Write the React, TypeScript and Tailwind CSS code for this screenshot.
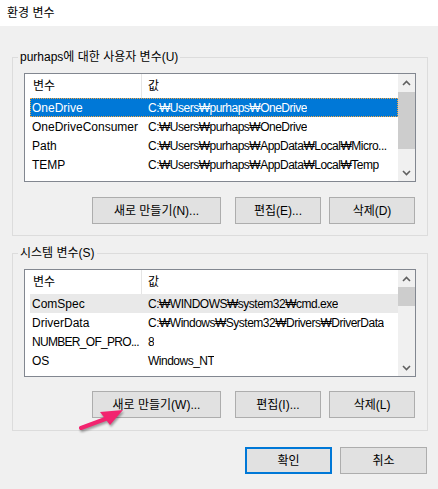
import React from 'react';

type Row = { name: string; value: string; tight?: boolean };

const userRows: Row[] = [
  { name: 'OneDrive', value: 'C:₩Users₩purhaps₩OneDrive' },
  { name: 'OneDriveConsumer', value: 'C:₩Users₩purhaps₩OneDrive' },
  { name: 'Path', value: 'C:₩Users₩purhaps₩AppData₩Local₩Micro...' },
  { name: 'TEMP', value: 'C:₩Users₩purhaps₩AppData₩Local₩Temp' },
];

const systemRows: Row[] = [
  { name: 'ComSpec', value: 'C:₩WINDOWS₩system32₩cmd.exe' },
  { name: 'DriverData', value: 'C:₩Windows₩System32₩Drivers₩DriverData' },
  { name: 'NUMBER_OF_PRO...', value: '8', tight: true },
  { name: 'OS', value: 'Windows_NT' },
];

const Chevron: React.FC<{ up?: boolean }> = ({ up }) => (
  <svg width="9" height="6" viewBox="0 0 9 6" className="block">
    <path
      d={up ? 'M1 5 L4.5 1.5 L8 5' : 'M1 1 L4.5 4.5 L8 1'}
      fill="none"
      stroke="#606060"
      strokeWidth="1.6"
    />
  </svg>
);

const ListView: React.FC<{
  rows: Row[];
  height: string;
  thumbTop: string;
  thumbHeight: string;
  selected?: number;
  hover?: number;
}> = ({ rows, height, thumbTop, thumbHeight, selected, hover }) => (
  <div className={`ml-[11px] w-[392px] ${height} border border-[#828790] bg-white flex`}>
    <div className="flex-1 min-w-0 overflow-hidden">
      <div className="h-[24px] flex items-center">
        <div className="w-[117px] shrink-0 h-full flex items-center pl-[8px] border-r border-[#e5e5e5]">변수</div>
        <div className="pl-[6px]">값</div>
      </div>
      <div className="pl-[5px]">
        {rows.map((r, i) => {
          const isSel = i === selected;
          const isHover = i === hover;
          return (
            <div
              key={r.name}
              className={`h-[19px] flex items-center whitespace-nowrap ${
                isSel
                  ? 'bg-[#0078d7] text-white outline outline-1 outline-dotted outline-offset-[-1px] outline-[#f5a742]'
                  : isHover
                  ? 'bg-[#e9e9e9]'
                  : ''
              }`}
            >
              <div className={`w-[112px] shrink-0 pl-[2px] overflow-hidden ${r.tight ? 'tracking-[-0.7px]' : ''}`}>
                {r.name}
              </div>
              <div className="pl-[6px] min-w-0 overflow-hidden tracking-[-0.5px]">{r.value}</div>
            </div>
          );
        })}
      </div>
    </div>
    <div className="w-[17px] shrink-0 bg-[#f0f0f0] flex flex-col">
      <div className="h-[17px] flex items-center justify-center">
        <Chevron up />
      </div>
      <div className="flex-1 relative">
        <div className={`absolute left-0 right-0 ${thumbTop} ${thumbHeight} bg-[#cdcdcd]`} />
      </div>
      <div className="h-[17px] flex items-center justify-center">
        <Chevron />
      </div>
    </div>
  </div>
);

const Button: React.FC<{ label: string; width: string; primary?: boolean }> = ({ label, width, primary }) => (
  <button
    className={`${width} h-[27px] bg-[#e1e1e1] flex items-center justify-center ${
      primary ? 'border-2 border-[#0078d7]' : 'border border-[#adadad]'
    }`}
  >
    {label}
  </button>
);

const ButtonRow: React.FC<{ labels: string[] }> = ({ labels }) => (
  <div className="flex pl-[79px] gap-[14px]">
    <Button label={labels[0]} width="w-[129px]" />
    <div className="flex gap-[8px]">
      <Button label={labels[1]} width="w-[86px]" />
      <Button label={labels[2]} width="w-[86px]" />
    </div>
  </div>
);

const App: React.FC = () => {
  return (
    <div className="w-[438px] h-[489px] bg-[#f0f0f0] relative overflow-hidden text-[12px] leading-[16px] text-black font-['Liberation_Sans','DejaVu_Sans','Noto_Sans_CJK_KR',sans-serif]">
      <div className="h-[26px] bg-white flex items-center pl-[7px]">환경 변수</div>

      <div className="px-[12px]">
        <fieldset className="mt-[23px] w-[416px] border border-[#dcdcdc] pb-[11px]">
          <legend className="ml-[5px] px-[2px]">purhaps에 대한 사용자 변수(U)</legend>
          <div className="mt-[8px]">
            <ListView
              rows={userRows}
              height="h-[109px]"
              thumbTop="top-[1px]"
              thumbHeight="h-[57px]"
              selected={0}
            />
          </div>
          <div className="mt-[15px]">
            <ButtonRow labels={['새로 만들기(N)...', '편집(E)...', '삭제(D)']} />
          </div>
        </fieldset>

        <fieldset className="mt-[9px] w-[416px] border border-[#dcdcdc] pb-[12px]">
          <legend className="ml-[5px] px-[2px]">시스템 변수(S)</legend>
          <div className="mt-[8px]">
            <ListView
              rows={systemRows}
              height="h-[108px]"
              thumbTop="top-0"
              thumbHeight="h-[19px]"
              hover={0}
            />
          </div>
          <div className="mt-[14px]">
            <ButtonRow labels={['새로 만들기(W)...', '편집(I)...', '삭제(L)']} />
          </div>
        </fieldset>

        <div className="mt-[16px] -mr-px flex justify-end gap-[8px]">
          <Button label="확인" width="w-[87px]" primary />
          <Button label="취소" width="w-[87px]" />
        </div>
      </div>

      <svg
        className="absolute left-0 top-0 pointer-events-none drop-shadow-[1px_2px_1px_rgba(0,0,0,0.35)]"
        width="438"
        height="489"
      >
        <line x1="81" y1="428" x2="108" y2="418" stroke="#f2246f" strokeWidth="4" strokeLinecap="round" />
        <polygon points="123,410 100,412 110,425" fill="#f2246f" />
      </svg>
    </div>
  );
};

export default App;
